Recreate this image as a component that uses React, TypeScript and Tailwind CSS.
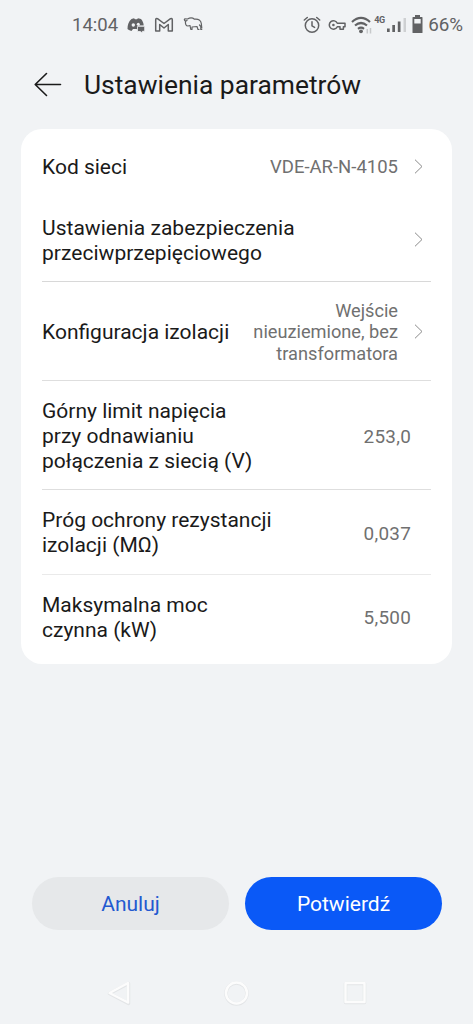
import React from "react";

type RowProps = {
  label: React.ReactNode;
  value?: React.ReactNode;
  valueClass?: string;
  labelClass?: string;
  chevron?: boolean;
  className: string;
};

function Chevron() {
  return (
    <svg width="12" height="18" viewBox="0 0 12 18" fill="none" stroke="#8b8b8b" strokeWidth="1" className="shrink-0">
      <path d="M2 1.700 9 8.500 2 15.300" />
    </svg>
  );
}

function Row({ label, value, valueClass = "text-[18.5px]", labelClass = "", chevron, className }: RowProps) {
  return (
    <div className={`flex items-center justify-between ${className}`}>
      <div className={`whitespace-nowrap text-[21px] leading-[25px] text-[#1a1a1a] ${labelClass}`}>{label}</div>
      <div className={`flex items-center ${chevron ? "gap-[15px] pr-[6px]" : "pr-5"}`}>
        {value && <div className={`whitespace-nowrap text-right leading-[21.5px] text-[#707070] ${valueClass}`}>{value}</div>}
        {chevron && <Chevron />}
      </div>
    </div>
  );
}

function StatusBar() {
  return (
    <div className="flex h-[49px] items-center justify-between pl-[72px] pr-[10px] text-[#616264]">
      <div className="flex items-center">
        <span className="w-[54px] text-[18.5px] leading-6">14:04</span>
        <svg width="19" height="16" viewBox="0 0 19 16" className="ml-[1px]">
          <path fill="currentColor" d="M4.500 2 7 1.200l1 1h2l1-1L14 2c1.800 2.200 2.600 4 2.700 6.500H11v4.500L9.500 12H6l-1.500 2C2.500 13.500 1.200 12.500.5 12c0-4 1-7.500 4-10Z" />
          <circle cx="6.300" cy="8" r="1.700" fill="#f1f3f5" />
          <circle cx="11.300" cy="7.200" r="1.500" fill="#f1f3f5" />
          <path fill="currentColor" stroke="#f1f3f5" strokeWidth=".8" d="M10.500 9.300h7.200v5h-2.200V16L13.300 14.500h-2.800z" />
        </svg>
        <svg width="20" height="16" viewBox="0 0 20 16" className="ml-[8px]" fill="none" stroke="currentColor" strokeWidth="1.500" strokeLinejoin="round">
          <path d="M1.700 3Q1.700 1 3.500 1.700L10 6.500l6.500-4.800q1.800-.7 1.800 1.300V14h-4V7.500L10 11 5.700 7.500V14h-4Z" />
        </svg>
        <svg width="20" height="17" viewBox="0 0 20 17" className="ml-[9px]" fill="none" stroke="currentColor" strokeWidth="1.200" strokeLinejoin="round" strokeLinecap="round">
          <path d="M1.300 3.500C1.500 5 2.500 5.300 4 4.500M1.300 3.500 1.800 2.800 4.500 3C7 1.500 9.500 1.500 11.500 3.200c4-.5 6.500 1 6.800 4.300l.5 4.500M2.500 5.500C2.200 8 3 10 5 10l2-.5.8 4h1.200V11l5-.5 1 3h1M16.500 9l1.300 1.500v3h1" />
        </svg>
      </div>
      <div className="flex items-center">
        <svg width="18" height="18" viewBox="0 0 18 18" fill="none" stroke="currentColor" strokeWidth="1.500" strokeLinecap="round">
          <circle cx="9" cy="9.500" r="6.700" />
          <path d="M9 5.700v4.200l2.600 1.500M1.300 4l3-2.500M16.700 4l-3-2.500" />
        </svg>
        <svg width="18" height="12" viewBox="0 0 18 12" className="ml-[7px]" fill="none" stroke="currentColor" strokeWidth="1.500" strokeLinejoin="round">
          <path d="M9.300 4.200H17v3.500h-1.600v2.500H12V7.700H9.300A4.200 4.200 0 1 1 9.300 4.200Z" />
          <circle cx="5.400" cy="6" r="1.300" fill="currentColor" stroke="none" />
        </svg>
        <svg width="22" height="18" viewBox="0 0 22 18" className="ml-[5px]" fill="none" stroke="currentColor" strokeWidth="2.200">
          <path d="M1 6Q10 -2.200 19 6M4 9.500q6-5 12 0M7 12.800q3-2.300 6 0" />
          <circle cx="10" cy="15.300" r="1.900" fill="currentColor" stroke="none" />
          <path d="M16.300 13v4.500M19.500 12v5.500" stroke="#c7c9cb" strokeWidth="1.500" />
        </svg>
        <span className="ml-[1px] -mt-[9px] w-[11px] text-[9px] font-bold leading-[10px] tracking-[-0.4px]">4G</span>
        <svg width="20" height="16" viewBox="0 0 20 16" className="ml-[2px]" fill="currentColor">
          <path d="M0 11.500h2.700V15H0zM5.300 8H8v7H5.300zM10.800 4.500h2.700V15h-2.700z" />
          <path d="M16.500 1H19v14h-2.500z" fill="#ced0d2" />
        </svg>
        <svg width="11" height="18" viewBox="0 0 11 18" className="-mt-[2px] ml-[5px]" fill="currentColor">
          <path fillRule="evenodd" d="M3 0h5v2h2q.5 0 .5.500v15q0 .5-.5.500H1q-.5 0-.5-.5v-15Q.5 2 1 2h2ZM2.300 4v4.500h6.400V4Z" />
        </svg>
        <span className="ml-[5px] text-[18.8px] leading-6">66%</span>
      </div>
    </div>
  );
}

export default function App() {
  return (
    <div className="flex h-[1024px] w-[473px] flex-col overflow-hidden bg-[#f1f3f5] font-['Roboto',sans-serif]">
      <StatusBar />
      <header className="flex h-20 items-start pl-[33px] pt-[21px]">
        <svg width="30" height="28" viewBox="0 0 30 28" fill="none" stroke="#1a1a1a" strokeWidth="1.600" strokeLinecap="round" strokeLinejoin="round">
          <path d="M13.500 3.500 2.200 14.500l11.300 11M2.500 14.500h25" />
        </svg>
        <h1 className="ml-[21px] text-[26.4px] leading-[31px] text-[#1a1a1a]">Ustawienia parametrów</h1>
      </header>

      <main className="ml-[21px] flex h-[535px] w-[431px] flex-col rounded-[21px] bg-white px-[21px] pt-[3px]">
        <Row className="h-[69px]" label="Kod sieci" labelClass="pt-[2px]" value="VDE-AR-N-4105" valueClass="pt-[2px] text-[18.5px]" chevron />
        <Row
          className="h-[81px] border-b border-[#d8d8d8] pb-[2px]"
          label={<>Ustawienia zabezpieczenia<br />przeciwprzepięciowego</>}
          labelClass="pt-[2px] tracking-[0.03px]"
          chevron
        />
        <Row
          className="h-[99px] border-b border-[#dedede] pt-[2px]"
          label="Konfiguracja izolacji"
          value={<>Wejście<br />nieuziemione, bez<br />transformatora</>}
          valueClass="text-[18.2px]"
          chevron
        />
        <Row
          className="h-[109px] border-b border-[#dedede] pt-[2px]"
          label={<>Górny limit napięcia<br />przy odnawianiu<br />połączenia z siecią (V)</>}
          value="253,0"
          valueClass="text-[18.9px] tracking-[0.25px] pt-[1px]"
        />
        <Row
          className="h-[85px] border-b border-[#eaeaea] pt-[2px]"
          label={<>Próg ochrony rezystancji<br />izolacji (MΩ)</>}
          value="0,037"
          valueClass="text-[18.9px] tracking-[0.25px] pt-[1px]"
        />
        <Row
          className="h-[84px] pt-[2px]"
          label={<>Maksymalna moc<br />czynna (kW)</>}
          value="5,500"
          valueClass="text-[18.9px] tracking-[0.25px]"
        />
      </main>

      <div className="mt-[213px] flex gap-4 pl-8 text-[21px]">
        <button className="h-[53px] w-[197px] rounded-full bg-[#e6e8ea] pt-[2px] text-[#2359d0]">Anuluj</button>
        <button className="h-[53px] w-[197px] rounded-full bg-[#0a59f7] pt-[2px] text-white">Potwierdź</button>
      </div>

      <nav className="mt-[48px] flex h-[30px] items-center pl-[106px]">
        <svg width="26" height="28" viewBox="0 0 26 28" fill="none" strokeLinejoin="round">
          <path d="M22.500 4.500v20L3.500 14.500Z" stroke="#e3e5e7" strokeWidth="3.500" />
          <path d="M22 4v19.500L3.500 14Z" stroke="#fcfcfc" strokeWidth="2.500" />
        </svg>
        <svg width="28" height="28" viewBox="0 0 28 28" fill="none" className="ml-[91px]">
          <circle cx="13.500" cy="14.500" r="10.500" stroke="#e3e5e7" strokeWidth="3.500" />
          <circle cx="13.500" cy="14" r="10.500" stroke="#fcfcfc" strokeWidth="2.500" />
        </svg>
        <svg width="28" height="28" viewBox="0 0 28 28" fill="none" strokeLinejoin="round" className="ml-[89px]">
          <path d="M5.500 4.500h19v19h-19Z" stroke="#e3e5e7" strokeWidth="3.500" />
          <path d="M5.500 4h19v19h-19Z" stroke="#fcfcfc" strokeWidth="2.500" />
        </svg>
      </nav>
    </div>
  );
}
